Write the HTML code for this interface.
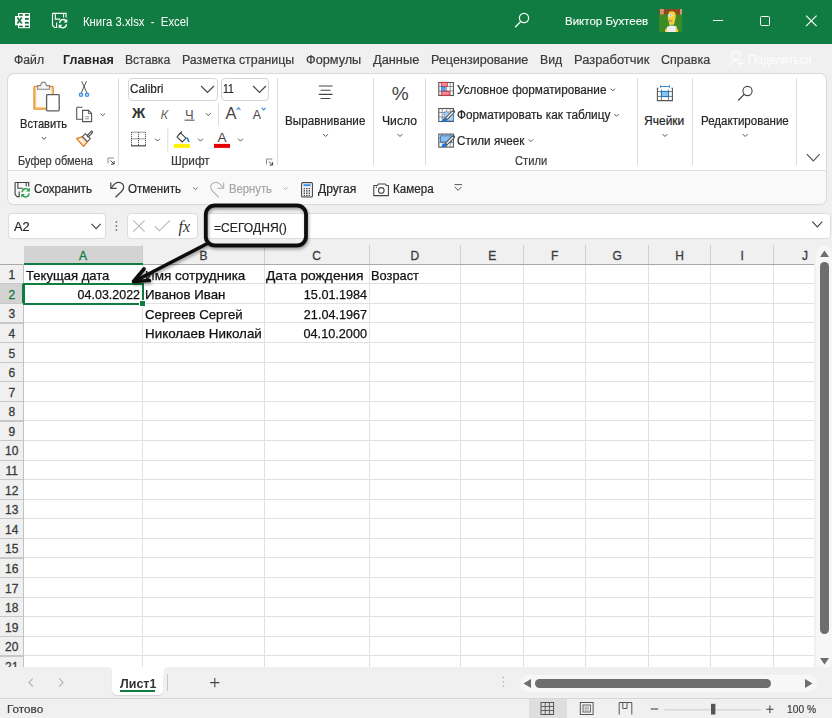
<!DOCTYPE html>
<html><head><meta charset="utf-8"><style>
html,body{margin:0;padding:0;}
body{width:832px;height:718px;overflow:hidden;position:relative;background:#f0f0f0;font-family:"Liberation Sans", sans-serif;}
</style></head><body>
<div style="position:absolute;left:0px;top:0px;width:832px;height:44px;background:#107c41"></div><svg style="position:absolute;left:0px;top:0px;" width="40" height="40" viewBox="0 0 40 40"><rect x="18" y="13" width="12" height="15.2" fill="#fff"/><rect x="19.2" y="14.1" width="3.5" height="1.7" fill="#0b6a35"/><rect x="24.9" y="14.1" width="3.9" height="1.7" fill="#0b6a35"/><rect x="19.2" y="18.0" width="3.5" height="1.7" fill="#0b6a35"/><rect x="24.9" y="18.0" width="3.9" height="1.7" fill="#0b6a35"/><rect x="19.2" y="21.9" width="3.5" height="1.7" fill="#0b6a35"/><rect x="24.9" y="21.9" width="3.9" height="1.7" fill="#0b6a35"/><rect x="19.2" y="25.5" width="3.5" height="1.7" fill="#0b6a35"/><rect x="24.9" y="25.5" width="3.9" height="1.7" fill="#0b6a35"/><rect x="23.5" y="13.8" width="1" height="13.6" fill="#fff"/><rect x="15" y="16" width="8.8" height="9.3" fill="#fff"/><path d="M17.3 17.5 L21.8 23.6 M21.8 17.5 L17.3 23.6" stroke="#107c41" stroke-width="1.7"/></svg><svg style="position:absolute;left:0px;top:0px;" width="80" height="40" viewBox="0 0 80 40"><g transform="translate(37.4 -169.1)"><path d="M15.1 182.5 H28.7 V186.6 M15.1 182.5 V194.6 L17.2 196.6 H19.2 V191.6" fill="none" stroke="#fff" stroke-width="1.15"/><path d="M17.9 182.5 V188.2 H22.9 M26.2 182.5 V186.6" fill="none" stroke="#fff" stroke-width="1.1"/><path d="M22.2 192.2 A3.6 3.6 0 0 1 29 190.6 M29 193.4 A3.6 3.6 0 0 1 22.3 195.2" fill="none" stroke="#fff" stroke-width="1.3"/><path d="M29.9 187.8 V191.6 H26.3 Z M21.3 197.8 V193.9 H24.9 Z" fill="#fff"/></g></svg><svg style="position:absolute;left:512px;top:10px;" width="18" height="20" viewBox="0 0 18 20"><circle cx="12" cy="8" r="4.6" fill="none" stroke="#fff" stroke-width="1.25"/><path d="M8.8 11.4 L3.6 16.8" stroke="#fff" stroke-width="1.35" stroke-linecap="round"/></svg><div style="position:absolute;left:712.7px;top:19.5px;width:10px;height:1.1px;background:#fff"></div><div style="position:absolute;left:759.5px;top:15.5px;width:10.3px;height:10.3px;border:1.1px solid #fff;border-radius:1.5px;box-sizing:border-box"></div><svg style="position:absolute;left:805px;top:15px;" width="13" height="12" viewBox="0 0 13 12"><path d="M1 0.6 L11.6 11.2 M11.6 0.6 L1 11.2" stroke="#fff" stroke-width="1.15"/></svg><svg style="position:absolute;left:659px;top:9px;" width="23" height="23" viewBox="0 0 23 23"><rect width="23" height="23" fill="#3d8b26"/><rect width="23" height="5.5" fill="#8b4a20"/><rect x="1" y="0" width="3.8" height="5.5" fill="#d09a70"/><rect x="21" y="0" width="2" height="5.5" fill="#d09a70"/><path d="M10 3 Q13.5 1.5 16 3.5 Q17.5 6 16.5 9 L15.5 13.5 L15 15.5 L10.5 16 L9.5 12 Q8.2 9 9 6 Z" fill="#f5d13a"/><ellipse cx="11.6" cy="6.6" rx="2.2" ry="1.4" fill="#e6eef8"/><circle cx="11.8" cy="6.6" r="0.6" fill="#6a86b8"/><path d="M9.8 10 Q12 11.5 13.8 10.5 L13.2 13 Q11 13.5 10 12.5 Z" fill="#c9a25a"/><path d="M6.5 23 L8 18 Q12 15.5 17.5 17.5 L18.5 23 Z" fill="#ededed"/><path d="M16.8 19 L19.3 21 L19 23 L16.5 23 Z" fill="#f5d13a"/><path d="M6.3 20 L8 19.5 L7.8 23 L6 23 Z" fill="#f5d13a"/></svg><span style="position:absolute;white-space:nowrap;font-size:12px;line-height:12px;font-weight:400;color:#fff;left:82.76px;top:15.64px;transform:scaleX(0.944);transform-origin:left;;">Книга 3.xlsx&nbsp; -&nbsp; Excel</span><span style="position:absolute;white-space:nowrap;font-size:11.8px;line-height:11.8px;font-weight:400;color:#fff;left:565.17px;top:15.61px;transform:scaleX(0.976);transform-origin:left;-webkit-text-stroke:0.1px #fff;">Виктор Бухтеев</span><span style="position:absolute;white-space:nowrap;font-size:12px;line-height:12px;font-weight:400;color:#3b3b3b;left:14.16px;top:54.34px;transform:scaleX(1.017);transform-origin:left;-webkit-text-stroke:0.2px #3b3b3b;">Файл</span><span style="position:absolute;white-space:nowrap;font-size:12px;line-height:12px;font-weight:700;color:#262626;left:62.66px;top:54.34px;transform:scaleX(1.040);transform-origin:left;">Главная</span><span style="position:absolute;white-space:nowrap;font-size:12px;line-height:12px;font-weight:400;color:#3b3b3b;left:125.16px;top:54.34px;transform:scaleX(1.014);transform-origin:left;-webkit-text-stroke:0.2px #3b3b3b;">Вставка</span><span style="position:absolute;white-space:nowrap;font-size:12px;line-height:12px;font-weight:400;color:#3b3b3b;left:182.16px;top:54.34px;transform:scaleX(1.031);transform-origin:left;-webkit-text-stroke:0.2px #3b3b3b;">Разметка страницы</span><span style="position:absolute;white-space:nowrap;font-size:12px;line-height:12px;font-weight:400;color:#3b3b3b;left:306.16px;top:54.34px;transform:scaleX(1.058);transform-origin:left;-webkit-text-stroke:0.2px #3b3b3b;">Формулы</span><span style="position:absolute;white-space:nowrap;font-size:12px;line-height:12px;font-weight:400;color:#3b3b3b;left:373.16px;top:54.34px;transform:scaleX(1.067);transform-origin:left;-webkit-text-stroke:0.2px #3b3b3b;">Данные</span><span style="position:absolute;white-space:nowrap;font-size:12px;line-height:12px;font-weight:400;color:#3b3b3b;left:431.16px;top:54.34px;transform:scaleX(1.050);transform-origin:left;-webkit-text-stroke:0.2px #3b3b3b;">Рецензирование</span><span style="position:absolute;white-space:nowrap;font-size:12px;line-height:12px;font-weight:400;color:#3b3b3b;left:540.16px;top:54.34px;transform:scaleX(1.023);transform-origin:left;-webkit-text-stroke:0.2px #3b3b3b;">Вид</span><span style="position:absolute;white-space:nowrap;font-size:12px;line-height:12px;font-weight:400;color:#3b3b3b;left:574.16px;top:54.34px;transform:scaleX(1.076);transform-origin:left;-webkit-text-stroke:0.2px #3b3b3b;">Разработчик</span><span style="position:absolute;white-space:nowrap;font-size:12px;line-height:12px;font-weight:400;color:#3b3b3b;left:661.16px;top:54.34px;transform:scaleX(1.046);transform-origin:left;-webkit-text-stroke:0.2px #3b3b3b;">Справка</span><span style="position:absolute;white-space:nowrap;font-size:12px;line-height:12px;font-weight:400;color:#fbfbfb;left:747.56px;top:54.04px;transform:scaleX(0.962);transform-origin:left;-webkit-text-stroke:0.2px #fbfbfb;">Поделиться</span><div style="position:absolute;left:8px;top:74px;width:818px;height:130px;background:#fff;border-radius:6px;box-shadow:0 0 0 1px #dadada, 0 1px 1.5px rgba(0,0,0,0.10)"></div><div style="position:absolute;left:8px;top:170px;width:818px;height:34px;background:#f9f9f9;border-radius:0 0 6px 6px;border-top:1px solid #e1e1e1;box-sizing:border-box"></div><div style="position:absolute;left:118.3px;top:78px;width:1px;height:87px;background:#dcdcdc"></div><div style="position:absolute;left:276.8px;top:78px;width:1px;height:87px;background:#dcdcdc"></div><div style="position:absolute;left:372.5px;top:78px;width:1px;height:87px;background:#dcdcdc"></div><div style="position:absolute;left:425.3px;top:78px;width:1px;height:87px;background:#dcdcdc"></div><div style="position:absolute;left:636.7px;top:78px;width:1px;height:87px;background:#dcdcdc"></div><div style="position:absolute;left:692.0px;top:78px;width:1px;height:87px;background:#dcdcdc"></div><div style="position:absolute;left:795.8px;top:78px;width:1px;height:87px;background:#dcdcdc"></div><span style="position:absolute;white-space:nowrap;font-size:12px;line-height:12px;font-weight:400;color:#262626;left:20.16px;top:117.64px;transform:scaleX(0.926);transform-origin:left;-webkit-text-stroke:0.2px #262626;">Вставить</span><span style="position:absolute;white-space:nowrap;font-size:12px;line-height:12px;font-weight:400;color:#3b3b3b;left:18.36px;top:155.44px;transform:scaleX(0.919);transform-origin:left;-webkit-text-stroke:0.2px #3b3b3b;">Буфер обмена</span><span style="position:absolute;white-space:nowrap;font-size:12px;line-height:12px;font-weight:400;color:#3b3b3b;left:170.66px;top:155.24px;transform:scaleX(0.980);transform-origin:left;-webkit-text-stroke:0.2px #3b3b3b;">Шрифт</span><span style="position:absolute;white-space:nowrap;font-size:12px;line-height:12px;font-weight:400;color:#262626;left:284.76px;top:115.44px;transform:scaleX(0.973);transform-origin:left;-webkit-text-stroke:0.2px #262626;">Выравнивание</span><span style="position:absolute;white-space:nowrap;font-size:12px;line-height:12px;font-weight:400;color:#262626;left:381.86px;top:115.44px;transform:scaleX(1.012);transform-origin:left;-webkit-text-stroke:0.2px #262626;">Число</span><span style="position:absolute;white-space:nowrap;font-size:12px;line-height:12px;font-weight:400;color:#262626;left:456.86px;top:84.24px;transform:scaleX(0.979);transform-origin:left;-webkit-text-stroke:0.2px #262626;">Условное форматирование</span><span style="position:absolute;white-space:nowrap;font-size:12px;line-height:12px;font-weight:400;color:#262626;left:456.86px;top:109.44px;transform:scaleX(0.982);transform-origin:left;-webkit-text-stroke:0.2px #262626;">Форматировать как таблицу</span><span style="position:absolute;white-space:nowrap;font-size:12px;line-height:12px;font-weight:400;color:#262626;left:456.86px;top:135.04px;transform:scaleX(0.973);transform-origin:left;-webkit-text-stroke:0.2px #262626;">Стили ячеек</span><span style="position:absolute;white-space:nowrap;font-size:12px;line-height:12px;font-weight:400;color:#3b3b3b;left:514.56px;top:155.04px;transform:scaleX(0.929);transform-origin:left;-webkit-text-stroke:0.2px #3b3b3b;">Стили</span><span style="position:absolute;white-space:nowrap;font-size:12px;line-height:12px;font-weight:400;color:#262626;left:644.06px;top:115.24px;-webkit-text-stroke:0.2px #262626;">Ячейки</span><span style="position:absolute;white-space:nowrap;font-size:12px;line-height:12px;font-weight:400;color:#262626;left:700.56px;top:115.24px;transform:scaleX(0.960);transform-origin:left;-webkit-text-stroke:0.2px #262626;">Редактирование</span><div style="position:absolute;left:127.6px;top:77.7px;width:90px;height:23px;border:1px solid #d5d5d5;border-radius:4px;box-sizing:border-box;background:#fff"></div><div style="position:absolute;left:220.6px;top:77.7px;width:48.6px;height:23px;border:1px solid #d5d5d5;border-radius:4px;box-sizing:border-box;background:#fff"></div><span style="position:absolute;white-space:nowrap;font-size:12px;line-height:12px;font-weight:400;color:#262626;left:129.86px;top:83.14px;transform:scaleX(0.984);transform-origin:left;-webkit-text-stroke:0.2px #262626;">Calibri</span><span style="position:absolute;white-space:nowrap;font-size:12px;line-height:12px;font-weight:400;color:#262626;left:222.76px;top:83.14px;transform:scaleX(0.870);transform-origin:left;-webkit-text-stroke:0.2px #262626;">11</span><span style="position:absolute;white-space:nowrap;font-size:12px;line-height:12px;font-weight:400;color:#262626;left:33.96px;top:183.34px;transform:scaleX(0.972);transform-origin:left;-webkit-text-stroke:0.2px #262626;">Сохранить</span><span style="position:absolute;white-space:nowrap;font-size:12px;line-height:12px;font-weight:400;color:#262626;left:128.16px;top:183.34px;transform:scaleX(0.969);transform-origin:left;-webkit-text-stroke:0.2px #262626;">Отменить</span><span style="position:absolute;white-space:nowrap;font-size:12px;line-height:12px;font-weight:400;color:#a6a6a6;left:228.76px;top:183.34px;transform:scaleX(0.939);transform-origin:left;-webkit-text-stroke:0.2px #a6a6a6;">Вернуть</span><span style="position:absolute;white-space:nowrap;font-size:12px;line-height:12px;font-weight:400;color:#262626;left:317.66px;top:183.34px;transform:scaleX(1.007);transform-origin:left;-webkit-text-stroke:0.2px #262626;">Другая</span><span style="position:absolute;white-space:nowrap;font-size:12px;line-height:12px;font-weight:400;color:#262626;left:392.66px;top:183.34px;transform:scaleX(0.970);transform-origin:left;-webkit-text-stroke:0.2px #262626;">Камера</span><div style="position:absolute;left:8px;top:212.8px;width:98px;height:25.8px;background:#fff;border:1px solid #dcdcdc;border-radius:4px;box-sizing:border-box"></div><div style="position:absolute;left:126.8px;top:212.8px;width:71px;height:25.8px;background:#fff;border:1px solid #dcdcdc;border-radius:4px;box-sizing:border-box"></div><div style="position:absolute;left:205px;top:212.8px;width:626px;height:25.8px;background:#fff;border:1px solid #dcdcdc;border-radius:4px;box-sizing:border-box"></div><span style="position:absolute;white-space:nowrap;font-size:12.5px;line-height:12.5px;font-weight:400;color:#262626;left:13.72px;top:221.42px;transform:scaleX(1.025);transform-origin:left;-webkit-text-stroke:0.2px #262626;">A2</span><span style="position:absolute;white-space:nowrap;font-size:12.5px;line-height:12.5px;font-weight:400;color:#262626;left:213.62px;top:221.62px;transform:scaleX(0.969);transform-origin:left;-webkit-text-stroke:0.2px #262626;">=СЕГОДНЯ()</span><div style="position:absolute;left:0px;top:245.5px;width:813.5px;height:18.600000000000023px;background:#f0f0f0"></div><div style="position:absolute;left:23.5px;top:264.1px;width:790.0px;height:402.9px;background:#fff"></div><div style="position:absolute;left:0px;top:264.1px;width:23.5px;height:402.9px;background:#f0f0f0"></div><div style="position:absolute;left:23.5px;top:245.5px;width:119.0px;height:18.600000000000023px;background:#d3d3d3"></div><div style="position:absolute;left:0px;top:283.69px;width:23.5px;height:19.59px;background:#d3d3d3"></div><div style="position:absolute;left:23.5px;top:283.19px;width:790.0px;height:1px;background:#e1e1e1"></div><div style="position:absolute;left:0;top:283.19px;width:23.5px;height:1.2px;background:#c8c8c8"></div><div style="position:absolute;left:23.5px;top:302.78px;width:790.0px;height:1px;background:#e1e1e1"></div><div style="position:absolute;left:0;top:302.78px;width:23.5px;height:1.2px;background:#c8c8c8"></div><div style="position:absolute;left:23.5px;top:322.37px;width:790.0px;height:1px;background:#e1e1e1"></div><div style="position:absolute;left:0;top:322.37px;width:23.5px;height:1.2px;background:#c8c8c8"></div><div style="position:absolute;left:23.5px;top:341.96px;width:790.0px;height:1px;background:#e1e1e1"></div><div style="position:absolute;left:0;top:341.96px;width:23.5px;height:1.2px;background:#c8c8c8"></div><div style="position:absolute;left:23.5px;top:361.55px;width:790.0px;height:1px;background:#e1e1e1"></div><div style="position:absolute;left:0;top:361.55px;width:23.5px;height:1.2px;background:#c8c8c8"></div><div style="position:absolute;left:23.5px;top:381.14px;width:790.0px;height:1px;background:#e1e1e1"></div><div style="position:absolute;left:0;top:381.14px;width:23.5px;height:1.2px;background:#c8c8c8"></div><div style="position:absolute;left:23.5px;top:400.73px;width:790.0px;height:1px;background:#e1e1e1"></div><div style="position:absolute;left:0;top:400.73px;width:23.5px;height:1.2px;background:#c8c8c8"></div><div style="position:absolute;left:23.5px;top:420.32px;width:790.0px;height:1px;background:#e1e1e1"></div><div style="position:absolute;left:0;top:420.32px;width:23.5px;height:1.2px;background:#c8c8c8"></div><div style="position:absolute;left:23.5px;top:439.91px;width:790.0px;height:1px;background:#e1e1e1"></div><div style="position:absolute;left:0;top:439.91px;width:23.5px;height:1.2px;background:#c8c8c8"></div><div style="position:absolute;left:23.5px;top:459.50px;width:790.0px;height:1px;background:#e1e1e1"></div><div style="position:absolute;left:0;top:459.50px;width:23.5px;height:1.2px;background:#c8c8c8"></div><div style="position:absolute;left:23.5px;top:479.09px;width:790.0px;height:1px;background:#e1e1e1"></div><div style="position:absolute;left:0;top:479.09px;width:23.5px;height:1.2px;background:#c8c8c8"></div><div style="position:absolute;left:23.5px;top:498.68px;width:790.0px;height:1px;background:#e1e1e1"></div><div style="position:absolute;left:0;top:498.68px;width:23.5px;height:1.2px;background:#c8c8c8"></div><div style="position:absolute;left:23.5px;top:518.27px;width:790.0px;height:1px;background:#e1e1e1"></div><div style="position:absolute;left:0;top:518.27px;width:23.5px;height:1.2px;background:#c8c8c8"></div><div style="position:absolute;left:23.5px;top:537.86px;width:790.0px;height:1px;background:#e1e1e1"></div><div style="position:absolute;left:0;top:537.86px;width:23.5px;height:1.2px;background:#c8c8c8"></div><div style="position:absolute;left:23.5px;top:557.45px;width:790.0px;height:1px;background:#e1e1e1"></div><div style="position:absolute;left:0;top:557.45px;width:23.5px;height:1.2px;background:#c8c8c8"></div><div style="position:absolute;left:23.5px;top:577.04px;width:790.0px;height:1px;background:#e1e1e1"></div><div style="position:absolute;left:0;top:577.04px;width:23.5px;height:1.2px;background:#c8c8c8"></div><div style="position:absolute;left:23.5px;top:596.63px;width:790.0px;height:1px;background:#e1e1e1"></div><div style="position:absolute;left:0;top:596.63px;width:23.5px;height:1.2px;background:#c8c8c8"></div><div style="position:absolute;left:23.5px;top:616.22px;width:790.0px;height:1px;background:#e1e1e1"></div><div style="position:absolute;left:0;top:616.22px;width:23.5px;height:1.2px;background:#c8c8c8"></div><div style="position:absolute;left:23.5px;top:635.81px;width:790.0px;height:1px;background:#e1e1e1"></div><div style="position:absolute;left:0;top:635.81px;width:23.5px;height:1.2px;background:#c8c8c8"></div><div style="position:absolute;left:23.5px;top:655.40px;width:790.0px;height:1px;background:#e1e1e1"></div><div style="position:absolute;left:0;top:655.40px;width:23.5px;height:1.2px;background:#c8c8c8"></div><div style="position:absolute;left:142.00px;top:264.1px;width:1px;height:402.9px;background:#e1e1e1"></div><div style="position:absolute;left:142.00px;top:245.0px;width:1px;height:19.100000000000023px;background:#cfcfcf"></div><div style="position:absolute;left:263.90px;top:264.1px;width:1px;height:402.9px;background:#e1e1e1"></div><div style="position:absolute;left:263.90px;top:245.0px;width:1px;height:19.100000000000023px;background:#cfcfcf"></div><div style="position:absolute;left:368.50px;top:264.1px;width:1px;height:402.9px;background:#e1e1e1"></div><div style="position:absolute;left:368.50px;top:245.0px;width:1px;height:19.100000000000023px;background:#cfcfcf"></div><div style="position:absolute;left:460.40px;top:264.1px;width:1px;height:402.9px;background:#e1e1e1"></div><div style="position:absolute;left:460.40px;top:245.0px;width:1px;height:19.100000000000023px;background:#cfcfcf"></div><div style="position:absolute;left:523.00px;top:264.1px;width:1px;height:402.9px;background:#e1e1e1"></div><div style="position:absolute;left:523.00px;top:245.0px;width:1px;height:19.100000000000023px;background:#cfcfcf"></div><div style="position:absolute;left:585.40px;top:264.1px;width:1px;height:402.9px;background:#e1e1e1"></div><div style="position:absolute;left:585.40px;top:245.0px;width:1px;height:19.100000000000023px;background:#cfcfcf"></div><div style="position:absolute;left:647.80px;top:264.1px;width:1px;height:402.9px;background:#e1e1e1"></div><div style="position:absolute;left:647.80px;top:245.0px;width:1px;height:19.100000000000023px;background:#cfcfcf"></div><div style="position:absolute;left:710.30px;top:264.1px;width:1px;height:402.9px;background:#e1e1e1"></div><div style="position:absolute;left:710.30px;top:245.0px;width:1px;height:19.100000000000023px;background:#cfcfcf"></div><div style="position:absolute;left:773.10px;top:264.1px;width:1px;height:402.9px;background:#e1e1e1"></div><div style="position:absolute;left:773.10px;top:245.0px;width:1px;height:19.100000000000023px;background:#cfcfcf"></div><div style="position:absolute;left:0px;top:263.6px;width:813.5px;height:1px;background:#a9a9a9"></div><div style="position:absolute;left:22.5px;top:264.1px;width:1.4px;height:402.9px;background:#c2c2c2"></div><div style="position:absolute;left:23.5px;top:262.6px;width:119.0px;height:2px;background:#107c41"></div><div style="position:absolute;left:22.0px;top:283.69px;width:2px;height:19.59px;background:#107c41"></div><svg style="position:absolute;left:0px;top:240px;" width="30" height="30" viewBox="0 0 30 30"><path d="M20.8 250 L20.8 260.8 L9.4 260.8 Z" fill="#bcbcbc"/></svg><span style="position:absolute;white-space:nowrap;font-size:12px;line-height:12px;font-weight:400;color:#107c41;left:-17.00px;width:200px;text-align:center;top:249.64px;-webkit-text-stroke:0.3px #107c41;">A</span><span style="position:absolute;white-space:nowrap;font-size:12px;line-height:12px;font-weight:400;color:#3b3b3b;left:103.45px;width:200px;text-align:center;top:249.64px;-webkit-text-stroke:0.3px #3b3b3b;">B</span><span style="position:absolute;white-space:nowrap;font-size:12px;line-height:12px;font-weight:400;color:#3b3b3b;left:216.70px;width:200px;text-align:center;top:249.64px;-webkit-text-stroke:0.3px #3b3b3b;">C</span><span style="position:absolute;white-space:nowrap;font-size:12px;line-height:12px;font-weight:400;color:#3b3b3b;left:314.95px;width:200px;text-align:center;top:249.64px;-webkit-text-stroke:0.3px #3b3b3b;">D</span><span style="position:absolute;white-space:nowrap;font-size:12px;line-height:12px;font-weight:400;color:#3b3b3b;left:392.20px;width:200px;text-align:center;top:249.64px;-webkit-text-stroke:0.3px #3b3b3b;">E</span><span style="position:absolute;white-space:nowrap;font-size:12px;line-height:12px;font-weight:400;color:#3b3b3b;left:454.70px;width:200px;text-align:center;top:249.64px;-webkit-text-stroke:0.3px #3b3b3b;">F</span><span style="position:absolute;white-space:nowrap;font-size:12px;line-height:12px;font-weight:400;color:#3b3b3b;left:517.10px;width:200px;text-align:center;top:249.64px;-webkit-text-stroke:0.3px #3b3b3b;">G</span><span style="position:absolute;white-space:nowrap;font-size:12px;line-height:12px;font-weight:400;color:#3b3b3b;left:579.55px;width:200px;text-align:center;top:249.64px;-webkit-text-stroke:0.3px #3b3b3b;">H</span><span style="position:absolute;white-space:nowrap;font-size:12px;line-height:12px;font-weight:400;color:#3b3b3b;left:642.20px;width:200px;text-align:center;top:249.64px;-webkit-text-stroke:0.3px #3b3b3b;">I</span><span style="position:absolute;white-space:nowrap;font-size:12px;line-height:12px;font-weight:400;color:#3b3b3b;left:704.90px;width:200px;text-align:center;top:249.64px;-webkit-text-stroke:0.3px #3b3b3b;">J</span><span style="position:absolute;white-space:nowrap;font-size:12px;line-height:12px;font-weight:400;color:#3b3b3b;left:-88.25px;width:200px;text-align:center;top:269.14px;-webkit-text-stroke:0.3px #3b3b3b;">1</span><span style="position:absolute;white-space:nowrap;font-size:12px;line-height:12px;font-weight:400;color:#107c41;left:-88.25px;width:200px;text-align:center;top:288.73px;-webkit-text-stroke:0.3px #107c41;">2</span><span style="position:absolute;white-space:nowrap;font-size:12px;line-height:12px;font-weight:400;color:#3b3b3b;left:-88.25px;width:200px;text-align:center;top:308.32px;-webkit-text-stroke:0.3px #3b3b3b;">3</span><span style="position:absolute;white-space:nowrap;font-size:12px;line-height:12px;font-weight:400;color:#3b3b3b;left:-88.25px;width:200px;text-align:center;top:327.91px;-webkit-text-stroke:0.3px #3b3b3b;">4</span><span style="position:absolute;white-space:nowrap;font-size:12px;line-height:12px;font-weight:400;color:#3b3b3b;left:-88.25px;width:200px;text-align:center;top:347.50px;-webkit-text-stroke:0.3px #3b3b3b;">5</span><span style="position:absolute;white-space:nowrap;font-size:12px;line-height:12px;font-weight:400;color:#3b3b3b;left:-88.25px;width:200px;text-align:center;top:367.09px;-webkit-text-stroke:0.3px #3b3b3b;">6</span><span style="position:absolute;white-space:nowrap;font-size:12px;line-height:12px;font-weight:400;color:#3b3b3b;left:-88.25px;width:200px;text-align:center;top:386.68px;-webkit-text-stroke:0.3px #3b3b3b;">7</span><span style="position:absolute;white-space:nowrap;font-size:12px;line-height:12px;font-weight:400;color:#3b3b3b;left:-88.25px;width:200px;text-align:center;top:406.27px;-webkit-text-stroke:0.3px #3b3b3b;">8</span><span style="position:absolute;white-space:nowrap;font-size:12px;line-height:12px;font-weight:400;color:#3b3b3b;left:-88.25px;width:200px;text-align:center;top:425.86px;-webkit-text-stroke:0.3px #3b3b3b;">9</span><span style="position:absolute;white-space:nowrap;font-size:12px;line-height:12px;font-weight:400;color:#3b3b3b;left:-88.25px;width:200px;text-align:center;top:445.45px;-webkit-text-stroke:0.3px #3b3b3b;">10</span><span style="position:absolute;white-space:nowrap;font-size:12px;line-height:12px;font-weight:400;color:#3b3b3b;left:-88.25px;width:200px;text-align:center;top:465.04px;-webkit-text-stroke:0.3px #3b3b3b;">11</span><span style="position:absolute;white-space:nowrap;font-size:12px;line-height:12px;font-weight:400;color:#3b3b3b;left:-88.25px;width:200px;text-align:center;top:484.63px;-webkit-text-stroke:0.3px #3b3b3b;">12</span><span style="position:absolute;white-space:nowrap;font-size:12px;line-height:12px;font-weight:400;color:#3b3b3b;left:-88.25px;width:200px;text-align:center;top:504.22px;-webkit-text-stroke:0.3px #3b3b3b;">13</span><span style="position:absolute;white-space:nowrap;font-size:12px;line-height:12px;font-weight:400;color:#3b3b3b;left:-88.25px;width:200px;text-align:center;top:523.81px;-webkit-text-stroke:0.3px #3b3b3b;">14</span><span style="position:absolute;white-space:nowrap;font-size:12px;line-height:12px;font-weight:400;color:#3b3b3b;left:-88.25px;width:200px;text-align:center;top:543.40px;-webkit-text-stroke:0.3px #3b3b3b;">15</span><span style="position:absolute;white-space:nowrap;font-size:12px;line-height:12px;font-weight:400;color:#3b3b3b;left:-88.25px;width:200px;text-align:center;top:562.99px;-webkit-text-stroke:0.3px #3b3b3b;">16</span><span style="position:absolute;white-space:nowrap;font-size:12px;line-height:12px;font-weight:400;color:#3b3b3b;left:-88.25px;width:200px;text-align:center;top:582.58px;-webkit-text-stroke:0.3px #3b3b3b;">17</span><span style="position:absolute;white-space:nowrap;font-size:12px;line-height:12px;font-weight:400;color:#3b3b3b;left:-88.25px;width:200px;text-align:center;top:602.17px;-webkit-text-stroke:0.3px #3b3b3b;">18</span><span style="position:absolute;white-space:nowrap;font-size:12px;line-height:12px;font-weight:400;color:#3b3b3b;left:-88.25px;width:200px;text-align:center;top:621.76px;-webkit-text-stroke:0.3px #3b3b3b;">19</span><span style="position:absolute;white-space:nowrap;font-size:12px;line-height:12px;font-weight:400;color:#3b3b3b;left:-88.25px;width:200px;text-align:center;top:641.35px;-webkit-text-stroke:0.3px #3b3b3b;">20</span><span style="position:absolute;white-space:nowrap;font-size:12px;line-height:12px;font-weight:400;color:#3b3b3b;left:-88.25px;width:200px;text-align:center;top:660.94px;-webkit-text-stroke:0.3px #3b3b3b;">21</span><span style="position:absolute;white-space:nowrap;font-size:13px;line-height:13px;font-weight:400;color:#111;left:26.09px;top:268.60px;transform:scaleX(1.005);transform-origin:left;-webkit-text-stroke:0.25px #111;">Текущая дата</span><span style="position:absolute;white-space:nowrap;font-size:13px;line-height:13px;font-weight:400;color:#111;right:692.35px;top:288.19px;transform:scaleX(0.960);transform-origin:right;-webkit-text-stroke:0.25px #111;">04.03.2022</span><span style="position:absolute;white-space:nowrap;font-size:13px;line-height:13px;font-weight:400;color:#111;left:144.59px;top:268.60px;transform:scaleX(1.036);transform-origin:left;-webkit-text-stroke:0.25px #111;">Имя сотрудника</span><span style="position:absolute;white-space:nowrap;font-size:13px;line-height:13px;font-weight:400;color:#111;left:144.59px;top:288.19px;transform:scaleX(1.020);transform-origin:left;-webkit-text-stroke:0.25px #111;">Иванов Иван</span><span style="position:absolute;white-space:nowrap;font-size:13px;line-height:13px;font-weight:400;color:#111;left:144.59px;top:307.78px;transform:scaleX(1.017);transform-origin:left;-webkit-text-stroke:0.25px #111;">Сергеев Сергей</span><span style="position:absolute;white-space:nowrap;font-size:13px;line-height:13px;font-weight:400;color:#111;left:144.59px;top:327.37px;transform:scaleX(1.029);transform-origin:left;-webkit-text-stroke:0.25px #111;">Николаев Николай</span><span style="position:absolute;white-space:nowrap;font-size:13px;line-height:13px;font-weight:400;color:#111;left:265.59px;top:268.60px;transform:scaleX(1.062);transform-origin:left;-webkit-text-stroke:0.25px #111;">Дата рождения</span><span style="position:absolute;white-space:nowrap;font-size:13px;line-height:13px;font-weight:400;color:#111;right:465.05px;top:288.19px;transform:scaleX(0.972);transform-origin:right;-webkit-text-stroke:0.25px #111;">15.01.1984</span><span style="position:absolute;white-space:nowrap;font-size:13px;line-height:13px;font-weight:400;color:#111;right:465.05px;top:307.78px;transform:scaleX(0.972);transform-origin:right;-webkit-text-stroke:0.25px #111;">21.04.1967</span><span style="position:absolute;white-space:nowrap;font-size:13px;line-height:13px;font-weight:400;color:#111;right:464.85px;top:327.37px;transform:scaleX(0.977);transform-origin:right;-webkit-text-stroke:0.25px #111;">04.10.2000</span><span style="position:absolute;white-space:nowrap;font-size:13px;line-height:13px;font-weight:400;color:#111;left:371.39px;top:268.60px;transform:scaleX(0.986);transform-origin:left;-webkit-text-stroke:0.25px #111;">Возраст</span><div style="position:absolute;left:23px;top:283px;width:120.9px;height:22px;border:2px solid #107c41;box-sizing:border-box"></div><div style="position:absolute;left:138.8px;top:299.9px;width:7.2px;height:7.2px;background:#107c41;border:1px solid #fff;box-sizing:border-box"></div><div style="position:absolute;left:816.3px;top:245.5px;width:15.7px;height:424px;background:#f7f7f7;border-radius:8px"></div><svg style="position:absolute;left:819px;top:249px;" width="11" height="9" viewBox="0 0 11 9"><path d="M5.5 1.5 L10 8 L1 8 Z" fill="#6e6e6e"/></svg><div style="position:absolute;left:820px;top:262px;width:9px;height:372px;background:#6e6e6e;border-radius:4.5px"></div><svg style="position:absolute;left:819px;top:657px;" width="11" height="9" viewBox="0 0 11 9"><path d="M1 1 L10 1 L5.5 7.5 Z" fill="#6e6e6e"/></svg><div style="position:absolute;left:0px;top:667px;width:832px;height:31.5px;background:#f0f0f0"></div><div style="position:absolute;left:100px;top:667px;width:80px;height:8px;background:#fff"></div><div style="position:absolute;left:0px;top:667px;width:111.6px;height:31.5px;background:#f0f0f0;border-top-right-radius:4px"></div><div style="position:absolute;left:164.1px;top:667px;width:668px;height:31.5px;background:#f0f0f0;border-top-left-radius:4px"></div><div style="position:absolute;left:112.2px;top:667px;width:50.8px;height:27.5px;background:#fff;border-radius:0 0 5px 5px;box-shadow:0 1px 1px rgba(0,0,0,0.12)"></div><span style="position:absolute;white-space:nowrap;font-size:13px;line-height:13px;font-weight:700;color:#333;left:120.09px;top:677.10px;transform:scaleX(0.958);transform-origin:left;">Лист1</span><div style="position:absolute;left:120.3px;top:690px;width:35.2px;height:1.6px;background:#107c41"></div><div style="position:absolute;left:166.8px;top:674.4px;width:1px;height:17px;background:#c8c8c8"></div><div style="position:absolute;left:519.5px;top:675px;width:297px;height:17px;background:#f7f7f7;border-radius:8.5px"></div><div style="position:absolute;left:535.3px;top:678.5px;width:235.7px;height:9.2px;background:#6e6e6e;border-radius:4.6px"></div><svg style="position:absolute;left:522px;top:678px;" width="11" height="11" viewBox="0 0 11 11"><path d="M9 1 L9 10 L1.5 5.5 Z" fill="#6e6e6e"/></svg><svg style="position:absolute;left:803px;top:678px;" width="11" height="11" viewBox="0 0 11 11"><path d="M2 1 L2 10 L9.5 5.5 Z" fill="#6e6e6e"/></svg><div style="position:absolute;left:0px;top:698px;width:832px;height:20px;background:#f0f0f0;border-top:1px solid #d6d6d6;box-sizing:border-box"></div><div style="position:absolute;left:528.6px;top:699px;width:38px;height:19px;background:#dedede"></div><span style="position:absolute;white-space:nowrap;font-size:11.5px;line-height:11.5px;font-weight:400;color:#3b3b3b;left:6.60px;top:704.07px;transform:scaleX(1.018);transform-origin:left;-webkit-text-stroke:0.2px #3b3b3b;">Готово</span><span style="position:absolute;white-space:nowrap;font-size:11.5px;line-height:11.5px;font-weight:400;color:#3b3b3b;left:787.20px;top:704.07px;transform:scaleX(0.890);transform-origin:left;-webkit-text-stroke:0.2px #3b3b3b;">100 %</span><svg style="position:absolute;left:0;top:0" width="832" height="718"><rect x="34.1" y="86.6" width="19" height="22.4" rx="0.8" fill="#fafafa" stroke="#e9892b" stroke-width="1.5"/><path d="M35.5 88 V107.6 H45.5 M51.8 88 V93.5" fill="none" stroke="#f6cf7c" stroke-width="1.3"/><path d="M37.6 85.6 H40.6 Q41 82.1 43.5 82.1 Q46 82.1 46.4 85.6 H49.5 V89.3 H37.6 Z" fill="#f5f5f5" stroke="#878787" stroke-width="1.1"/><rect x="46.6" y="94.6" width="12.6" height="16.2" rx="0.8" fill="#fff" stroke="#5d5d5d" stroke-width="1.3"/><path d="M41.80 137.00 L44.00 139.40 L46.20 137.00" fill="none" stroke="#555" stroke-width="1.0"/><path d="M81.7 81.2 L86.9 92.8 M86.5 81.2 L81.3 92.8" stroke="#555" stroke-width="1" fill="none"/><circle cx="81" cy="94.8" r="1.6" fill="#fff" stroke="#3b8fe8" stroke-width="1.4"/><circle cx="87" cy="94.8" r="1.6" fill="#fff" stroke="#3b8fe8" stroke-width="1.4"/><path d="M82.6 107.3 H77.5 Q76.7 107.3 76.7 108.1 V119.2 H82" fill="none" stroke="#555" stroke-width="1.1"/><path d="M82.6 110.4 H88.6 L91.6 113.4 V121.6 H82.6 Z" fill="#fff" stroke="#555" stroke-width="1.1"/><path d="M88.4 110.4 V113.6 H91.6" fill="none" stroke="#555" stroke-width="0.9"/><path d="M85.2 116.8 H89 M85.2 118.8 H89" stroke="#888" stroke-width="0.9"/><path d="M100.60 113.50 L102.80 115.70 L105.00 113.50" fill="none" stroke="#555" stroke-width="1.0"/><path d="M82.4 136.6 L76.6 138.6 L83.6 146.4 L87.4 141.6 Z" fill="#fde3c4" stroke="#e27c22" stroke-width="1.3" stroke-linejoin="round"/><path d="M80 139.2 L83.6 143.2" stroke="#fff" stroke-width="1.1"/><path d="M82.4 136.6 L85.4 133.6 L90.4 138.6 L87.4 141.6 Z" fill="#fff" stroke="#555" stroke-width="1.1" stroke-linejoin="round"/><path d="M88.2 135.8 L91.6 132.2" stroke="#555" stroke-width="3" stroke-linecap="round"/><path d="M88.4 135.6 L91.4 132.4" stroke="#fff" stroke-width="0.9"/><path d="M108.0 163.3 V158.0 H113.8" fill="none" stroke="#8a8a8a" stroke-width="1"/><path d="M110.5 160.5 L114.1 164.1 M114.1 161.1 V164.1 H111.1" fill="none" stroke="#444" stroke-width="1"/><path d="M201.10 86.00 L207.50 92.40 L213.90 86.00" fill="none" stroke="#444" stroke-width="1.15"/><path d="M253.10 86.00 L259.50 92.40 L265.90 86.00" fill="none" stroke="#444" stroke-width="1.15"/><text x="132.0" y="118.4" font-family="Liberation Sans" font-weight="700" font-size="14.6" fill="#333">Ж</text><text x="160.4" y="118.6" font-family="Liberation Sans" font-style="italic" font-size="13" fill="#6a6a6a">К</text><text x="185" y="118.6" font-family="Liberation Sans" font-size="13" fill="#555">Ч</text><rect x="184.6" y="119.6" width="9.9" height="1.1" fill="#555"/><path d="M205.90 113.20 L208.30 115.60 L210.70 113.20" fill="none" stroke="#555" stroke-width="1.0"/><rect x="218" y="103.3" width="1" height="22" fill="#dcdcdc"/><rect x="167.3" y="128" width="1" height="23.6" fill="#dcdcdc"/><text x="225.6" y="119" font-family="Liberation Sans" font-size="16.5" fill="#444">A</text><path d="M236.6 110 L238.5 107.8 L240.4 110" fill="none" stroke="#2f86d6" stroke-width="1.1"/><text x="252.8" y="119" font-family="Liberation Sans" font-size="12.4" fill="#444">A</text><path d="M261.8 107.8 L263.7 110 L265.6 107.8" fill="none" stroke="#2f86d6" stroke-width="1.1"/><path d="M131.5 132.2 H145.5 V145.5 M131.5 132.2 V145.5 M138.5 132.2 V145.5 M131.5 138.8 H145.5" fill="none" stroke="#333" stroke-width="1" stroke-dasharray="1 1"/><rect x="131" y="145.2" width="15" height="1.2" fill="#444"/><path d="M155.10 138.70 L157.50 141.10 L159.90 138.70" fill="none" stroke="#555" stroke-width="1.0"/><path d="M180.5 132.8 L186 138.2 L182.2 142 L177 136.8 Z" fill="#fff" stroke="#444" stroke-width="1.1" stroke-linejoin="round"/><path d="M178.5 134.8 L182 131.5" stroke="#444" stroke-width="1.1"/><path d="M186.6 137.5 Q188.5 139.5 188.8 142" fill="none" stroke="#1c6fc2" stroke-width="1.6"/><rect x="173.8" y="143.9" width="16.2" height="4" fill="#fff200"/><path d="M198.10 138.70 L200.50 141.10 L202.90 138.70" fill="none" stroke="#555" stroke-width="1.0"/><text x="217.4" y="142.2" font-family="Liberation Sans" font-size="13.6" fill="#444">A</text><rect x="214" y="143.9" width="16" height="4" fill="#e80000"/><path d="M238.10 138.70 L240.50 141.10 L242.90 138.70" fill="none" stroke="#555" stroke-width="1.0"/><path d="M266.5 164.3 V159.0 H272.3" fill="none" stroke="#8a8a8a" stroke-width="1"/><path d="M269 161.5 L272.6 165.1 M272.6 162.1 V165.1 H269.6" fill="none" stroke="#444" stroke-width="1"/><path d="M318.8 86 H332.5 M320.6 90.2 H330.6 M318.8 94.4 H332.5 M320.6 98.5 H330.4" stroke="#444" stroke-width="1.1"/><path d="M323.20 134.10 L325.60 136.50 L328.00 134.10" fill="none" stroke="#555" stroke-width="1.0"/><text x="391.8" y="100" font-family="Liberation Sans" font-size="19" fill="#444">%</text><path d="M397.60 134.10 L400.00 136.50 L402.40 134.10" fill="none" stroke="#555" stroke-width="1.0"/><rect x="438.8" y="82.5" width="14.6" height="13" fill="#fff" stroke="#555" stroke-width="1.1"/><path d="M442.2 82 V95.5 M446.6 82 V95.5 M450.2 82 V95.5 M438.8 86.5 H453.4 M438.8 91 H453.4" stroke="#777" stroke-width="0.8"/><rect x="441.3" y="82.4" width="6" height="4" fill="#f08a96" stroke="#e0303c" stroke-width="0.9"/><rect x="441.3" y="91.4" width="8" height="3.8" fill="#f08a96" stroke="#e0303c" stroke-width="0.9"/><rect x="441.6" y="86.9" width="3.5" height="4" fill="#5aa8ee" stroke="#1f78d1" stroke-width="0.8"/><path d="M610.60 88.70 L612.80 90.90 L615.00 88.70" fill="none" stroke="#555" stroke-width="1.0"/><rect x="438.8" y="108.5" width="14.6" height="13" fill="#fff" stroke="#555" stroke-width="1.1"/><path d="M442.2 108 V121.5 M446.6 108 V121.5 M450.2 108 V121.5 M438.8 112.5 H453.4 M438.8 117 H453.4" stroke="#777" stroke-width="0.8"/><path d="M444 112 H453.4 V120.8 H444 Z" fill="#a9d1f3" stroke="#2a7fd4" stroke-width="0.9" stroke-dasharray="2 1"/><path d="M453.4 111.6 L446.2 118.8" stroke="#555" stroke-width="3.4" stroke-linecap="round"/><path d="M453 112 L446.6 118.4" stroke="#fff" stroke-width="1.3"/><path d="M441.6 121.9 Q442 118.6 444.6 118 L446.8 120.2 Q446.2 122.6 441.6 121.9 Z" fill="#1f78d1"/><path d="M614.30 114.10 L616.50 116.30 L618.70 114.10" fill="none" stroke="#555" stroke-width="1.0"/><rect x="438.8" y="134.1" width="14.6" height="13" fill="#fff" stroke="#555" stroke-width="1.1"/><path d="M442.2 133.6 V147.1 M446.6 133.6 V147.1 M450.2 133.6 V147.1 M438.8 138.1 H453.4 M438.8 142.6 H453.4" stroke="#777" stroke-width="0.8"/><rect x="440.4" y="135.8" width="11.2" height="6.2" fill="#8cc0ef" stroke="#1f78d1" stroke-width="0.9"/><path d="M453.4 136.79999999999998 L446.2 144.0" stroke="#555" stroke-width="3.4" stroke-linecap="round"/><path d="M453 137.2 L446.6 143.6" stroke="#fff" stroke-width="1.3"/><path d="M441.6 147.1 Q442 143.79999999999998 444.6 143.2 L446.8 145.4 Q446.2 147.79999999999998 441.6 147.1 Z" fill="#1f78d1"/><path d="M528.60 139.40 L530.80 141.60 L533.00 139.40" fill="none" stroke="#555" stroke-width="1.0"/><path d="M658.3 88.2 H657.4 V100.6 H672.4 V88.2 H671.5" fill="none" stroke="#555" stroke-width="1.1"/><path d="M661.4 89.5 V100.6 M668.4 89.5 V100.6 M657.4 91.6 H672.4 M657.4 96.4 H672.4" stroke="#666" stroke-width="0.9"/><rect x="661.4" y="91.4" width="7.2" height="5.2" fill="#8cc0ef" stroke="#1a73c8" stroke-width="1"/><path d="M660.5 86.5 H669.5 M660.5 85.2 V87.8 M669.5 85.2 V87.8" stroke="#2f8fe0" stroke-width="1"/><path d="M662.60 134.10 L665.00 136.50 L667.40 134.10" fill="none" stroke="#555" stroke-width="1.0"/><circle cx="747.5" cy="91" r="4.6" fill="none" stroke="#444" stroke-width="1.1"/><path d="M744.2 94.4 L738.6 100" stroke="#444" stroke-width="1.3" stroke-linecap="round"/><path d="M742.80 134.10 L745.20 136.50 L747.60 134.10" fill="none" stroke="#555" stroke-width="1.0"/><path d="M806.90 154.20 L813.30 160.80 L819.70 154.20" fill="none" stroke="#555" stroke-width="1.15"/><circle cx="735.9" cy="55.5" r="4.2" fill="none" stroke="#fcfcfc" stroke-width="1.2"/><path d="M729.8 66 Q730.5 60.4 736 60.2 H738.5 M740.6 60 V66.4 M737.2 63.2 H744" fill="none" stroke="#fcfcfc" stroke-width="1.2" stroke-linecap="round"/><path d="M15.1 182.5 H28.7 V186.6 M15.1 182.5 V194.6 L17.2 196.6 H19.2 V191.6" fill="none" stroke="#444" stroke-width="1.15"/><path d="M17.9 182.5 V188.2 H22.9 M26.2 182.5 V186.6" fill="none" stroke="#444" stroke-width="1.1"/><path d="M22.2 192.2 A3.6 3.6 0 0 1 29 190.6 M29 193.4 A3.6 3.6 0 0 1 22.3 195.2" fill="none" stroke="#22a04b" stroke-width="1.4"/><path d="M29.9 187.8 V191.6 H26.3 Z M21.3 197.8 V193.9 H24.9 Z" fill="#22a04b"/><path d="M110.8 182.5 V188.3 H116.6" fill="none" stroke="#444" stroke-width="1.2"/><path d="M111.4 187.8 C113.5 184.5 115.8 182.4 118.6 182.4 C121.6 182.4 123.7 184.6 123.7 187 C123.7 188.8 122.8 190.2 121.5 191.5 L115.5 197.3" fill="none" stroke="#444" stroke-width="1.2"/><path d="M193.30 187.40 L195.50 189.60 L197.70 187.40" fill="none" stroke="#666" stroke-width="1.0"/><path d="M223.6 182.5 V188.3 H217.8" fill="none" stroke="#b9b9b9" stroke-width="1.2"/><path d="M223 187.8 C220.9 184.5 218.6 182.4 215.8 182.4 C212.8 182.4 210.7 184.6 210.7 187 C210.7 188.8 211.6 190.2 212.9 191.5 L218.9 197.3" fill="none" stroke="#b9b9b9" stroke-width="1.2"/><path d="M283.30 187.40 L285.50 189.60 L287.70 187.40" fill="none" stroke="#b5b5b5" stroke-width="1.0"/><rect x="301.6" y="182.6" width="10.8" height="14.4" rx="1" fill="#fff" stroke="#444" stroke-width="1.1"/><rect x="303.4" y="184.2" width="7.2" height="2" fill="#3a8ee6"/><rect x="303.60" y="187.90" width="1.5" height="1.4" fill="#444"/><rect x="306.10" y="187.90" width="1.5" height="1.4" fill="#444"/><rect x="308.60" y="187.90" width="1.5" height="1.4" fill="#444"/><rect x="303.60" y="190.20" width="1.5" height="1.4" fill="#444"/><rect x="306.10" y="190.20" width="1.5" height="1.4" fill="#444"/><rect x="308.60" y="190.20" width="1.5" height="1.4" fill="#444"/><rect x="303.60" y="192.50" width="1.5" height="1.4" fill="#444"/><rect x="306.10" y="192.50" width="1.5" height="1.4" fill="#444"/><rect x="308.60" y="192.50" width="1.5" height="1.4" fill="#444"/><rect x="303.60" y="194.80" width="1.5" height="1.4" fill="#444"/><rect x="306.10" y="194.80" width="1.5" height="1.4" fill="#444"/><rect x="308.60" y="194.80" width="1.5" height="1.4" fill="#444"/><path d="M373.8 185.5 H377.4 L378.4 184 H385.4 L386.4 185.5 H388.4 V195.6 H373.8 Z" fill="#fff" stroke="#444" stroke-width="1.1" stroke-linejoin="round"/><circle cx="381.3" cy="190.4" r="2.8" fill="none" stroke="#444" stroke-width="1.1"/><circle cx="376.4" cy="187.3" r="0.7" fill="#444"/><path d="M454.5 184.6 H462" stroke="#555" stroke-width="1"/><path d="M454.80 186.90 L458.20 190.30 L461.60 186.90" fill="none" stroke="#555" stroke-width="1.0"/><path d="M91.50 223.90 L96.10 228.70 L100.70 223.90" fill="none" stroke="#444" stroke-width="1.15"/><circle cx="116.4" cy="222" r="0.9" fill="#777"/><circle cx="116.4" cy="226" r="0.9" fill="#777"/><circle cx="116.4" cy="230" r="0.9" fill="#777"/><path d="M133.2 220.3 L144.6 231.6 M144.6 220.3 L133.2 231.6" stroke="#b8b8b8" stroke-width="1.1"/><path d="M154.8 226.2 L159.3 230.8 L170 220.3" fill="none" stroke="#b8b8b8" stroke-width="1.1"/><text x="178.5" y="231.6" font-family="Liberation Serif" font-style="italic" font-size="16" fill="#333">fx</text><path d="M812.30 221.70 L817.30 226.90 L822.30 221.70" fill="none" stroke="#444" stroke-width="1.15"/><path d="M32.8 678.5 L29 682.6 L32.8 686.7" fill="none" stroke="#b0b0b0" stroke-width="1.1"/><path d="M59.2 678.5 L63 682.6 L59.2 686.7" fill="none" stroke="#b0b0b0" stroke-width="1.1"/><path d="M214.8 678 V687.2 M210.2 682.6 H219.4" stroke="#444" stroke-width="1.1"/><circle cx="503.4" cy="677.5" r="0.8" fill="#aaa"/><circle cx="503.4" cy="681.8" r="0.8" fill="#aaa"/><circle cx="503.4" cy="686.1" r="0.8" fill="#aaa"/><rect x="541" y="702.5" width="12.6" height="12" fill="none" stroke="#555" stroke-width="1"/><path d="M545.2 702.5 V714.5 M549.4 702.5 V714.5 M541 706.5 H553.6 M541 710.5 H553.6" stroke="#555" stroke-width="0.9"/><rect x="580.3" y="702.5" width="12.8" height="12" fill="none" stroke="#555" stroke-width="1"/><rect x="583" y="705" width="7.4" height="7" fill="none" stroke="#555" stroke-width="0.9"/><path d="M584.6 707 H588.8 M584.6 708.6 H588.8 M584.6 710.2 H588.8" stroke="#777" stroke-width="0.7"/><path d="M619.2 714.5 V702.5 H631.8 V714.5 M622.8 702.5 V708.5 H627 V702.5" fill="none" stroke="#555" stroke-width="1"/><path d="M650.8 709 H658.2" stroke="#444" stroke-width="1.1"/><path d="M664.3 709.8 H760.9" stroke="#c4c4c4" stroke-width="0.8"/><rect x="711" y="703.8" width="4.4" height="10.7" fill="#555"/><path d="M766.2 709.2 H773.6 M769.9 705.5 V712.9" stroke="#444" stroke-width="1.1"/></svg><svg style="position:absolute;left:0;top:0" width="832" height="718">
<defs><filter id="sh" x="-20%" y="-20%" width="140%" height="140%"><feGaussianBlur in="SourceAlpha" stdDeviation="1.5"/><feOffset dx="1" dy="2"/><feComponentTransfer><feFuncA type="linear" slope="0.35"/></feComponentTransfer><feMerge><feMergeNode/><feMergeNode in="SourceGraphic"/></feMerge></filter></defs>
<g filter="url(#sh)">
<rect x="205.8" y="205.5" width="100.2" height="40" rx="9" ry="9" fill="none" stroke="#111" stroke-width="3.8"/>
<path d="M207.5 243.5 L134 281.5" stroke="#111" stroke-width="3.6" fill="none" stroke-linecap="round"/>
<path d="M144 269 L133.5 281.5 L149.5 280.5" stroke="#111" stroke-width="3.6" fill="none" stroke-linecap="round" stroke-linejoin="round"/>
</g></svg>
</body></html>
